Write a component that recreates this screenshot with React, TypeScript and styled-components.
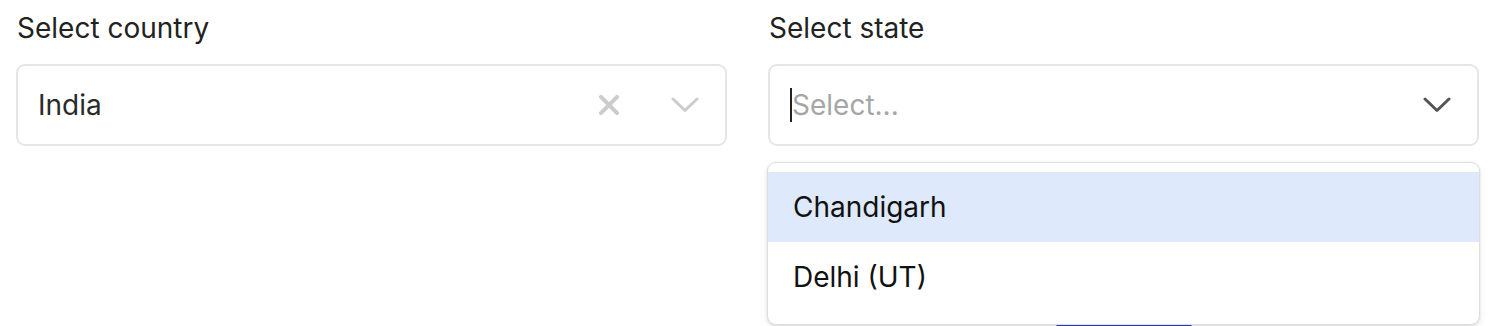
import React from 'react';
import styled, { createGlobalStyle } from 'styled-components';

const GlobalStyle = createGlobalStyle`
  body {
    margin: 0;
    background: #ffffff;
    font-family: Inter, "Noto Sans", sans-serif;
    color: #222222;
  }
`;

const Page = styled.div`
  display: grid;
  grid-template-columns: 711px 711px;
  column-gap: 41px;
  padding: 8px 0 0 16px;
`;

const Field = styled.div`
  position: relative;
  display: flex;
  flex-direction: column;
  gap: 16px;
`;

const Label = styled.label`
  font-size: 28px;
  line-height: 40px;
  color: #222222;
  padding-left: 1px;
`;

const Control = styled.div`
  display: flex;
  align-items: center;
  height: 82px;
  box-sizing: border-box;
  border: 2px solid #e6e6e6;
  border-radius: 9px;
  padding: 0 20px 0 20px;
  background: #ffffff;
`;

const ValueArea = styled.div<{ $placeholder?: boolean }>`
  flex: 1;
  display: flex;
  align-items: center;
  font-size: 28px;
  color: ${(p) => (p.$placeholder ? '#a6a6a6' : '#2a2a2a')};
`;

const Caret = styled.span`
  display: inline-block;
  width: 2px;
  height: 34px;
  background: #222222;
`;

const Indicators = styled.div`
  display: flex;
  align-items: center;
  gap: 36px;
`;

const IconBox = styled.span`
  display: flex;
  align-items: center;
  justify-content: center;
  width: 40px;
  height: 40px;
`;

const Menu = styled.div`
  position: absolute;
  top: 154px;
  left: -1px;
  right: -1px;
  box-sizing: border-box;
  padding: 9px 0 12px;
  border: 1px solid #dedede;
  border-radius: 9px;
  background: #ffffff;
  box-shadow: 0 1px 3px rgba(0, 0, 0, 0.12), 0 4px 10px rgba(0, 0, 0, 0.05);
  z-index: 2;
`;

const Option = styled.div<{ $focused?: boolean }>`
  height: 70px;
  display: flex;
  align-items: center;
  padding-left: 25px;
  font-size: 28px;
  color: #111111;
  background: ${(p) => (p.$focused ? '#dee9fb' : 'transparent')};
`;

const SubmitRow = styled.div`
  display: flex;
  justify-content: center;
  margin-top: 160px;
`;

const SubmitButton = styled.button`
  width: 138px;
  height: 56px;
  border: none;
  border-radius: 8px;
  background: #2a47bf;
`;

function ClearIcon() {
  return (
    <svg width="20" height="20" viewBox="0 0 20 20">
      <path d="M2 2 L18 18 M18 2 L2 18" stroke="#cccccc" strokeWidth="4" strokeLinecap="square" />
    </svg>
  );
}

function ChevronIcon({ color }: { color: string }) {
  return (
    <svg width="28" height="16" viewBox="0 0 28 16">
      <path d="M2 2 L14 13.5 L26 2" fill="none" stroke={color} strokeWidth="3" strokeLinecap="round" strokeLinejoin="round" />
    </svg>
  );
}

export default function App() {
  return (
    <>
      <GlobalStyle />
      <Page>
        <Field>
          <Label>Select country</Label>
          <Control>
            <ValueArea>India</ValueArea>
            <Indicators>
              <IconBox>
                <ClearIcon />
              </IconBox>
              <IconBox>
                <ChevronIcon color="#cccccc" />
              </IconBox>
            </Indicators>
          </Control>
        </Field>
        <Field>
          <Label>Select state</Label>
          <Control>
            <ValueArea $placeholder>
              <Caret />
              Select...
            </ValueArea>
            <Indicators>
              <IconBox>
                <ChevronIcon color="#555555" />
              </IconBox>
            </Indicators>
          </Control>
          <Menu>
            <Option $focused>Chandigarh</Option>
            <Option>Delhi (UT)</Option>
          </Menu>
          <SubmitRow>
            <SubmitButton aria-label="Submit" />
          </SubmitRow>
        </Field>
      </Page>
    </>
  );
}
